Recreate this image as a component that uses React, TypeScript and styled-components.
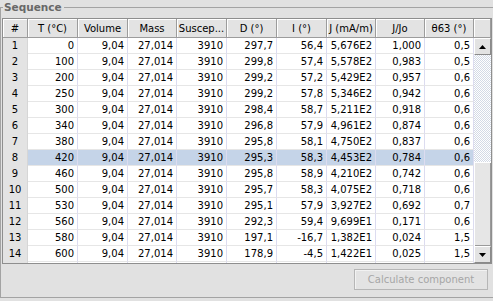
import React from 'react'
import styled, { createGlobalStyle } from 'styled-components'

const GlobalStyle = createGlobalStyle`
  html, body {
    margin: 0;
    padding: 0;
  }
  body {
    background: #e1e1e1;
    font-family: 'DejaVu Sans', Tahoma, sans-serif;
    font-size: 10px;
    color: #000;
  }
`

// column widths of the sequence table, # column first
const COLUMNS = [25, 50, 50, 49, 50, 50, 50, 49, 49, 49]
const template = COLUMNS.map((w) => `${w}px`).join(' ')

const HEADERS = ['#', 'T (°C)', 'Volume', 'Mass', 'Suscep...', 'D (°)', 'I (°)', 'J (mA/m)', 'J/Jo', 'θ63 (°)']

const ROWS = [
  ['0', '9,04', '27,014', '3910', '297,7', '56,4', '5,676E2', '1,000', '0,5'],
  ['100', '9,04', '27,014', '3910', '299,8', '57,4', '5,578E2', '0,983', '0,5'],
  ['200', '9,04', '27,014', '3910', '299,2', '57,2', '5,429E2', '0,957', '0,6'],
  ['250', '9,04', '27,014', '3910', '299,2', '57,8', '5,346E2', '0,942', '0,6'],
  ['300', '9,04', '27,014', '3910', '298,4', '58,7', '5,211E2', '0,918', '0,6'],
  ['340', '9,04', '27,014', '3910', '296,8', '57,9', '4,961E2', '0,874', '0,6'],
  ['380', '9,04', '27,014', '3910', '295,8', '58,1', '4,750E2', '0,837', '0,6'],
  ['420', '9,04', '27,014', '3910', '295,3', '58,3', '4,453E2', '0,784', '0,6'],
  ['460', '9,04', '27,014', '3910', '295,8', '58,9', '4,210E2', '0,742', '0,6'],
  ['500', '9,04', '27,014', '3910', '295,7', '58,3', '4,075E2', '0,718', '0,6'],
  ['530', '9,04', '27,014', '3910', '295,1', '57,9', '3,927E2', '0,692', '0,7'],
  ['560', '9,04', '27,014', '3910', '292,3', '59,4', '9,699E1', '0,171', '0,6'],
  ['580', '9,04', '27,014', '3910', '197,1', '-16,7', '1,382E1', '0,024', '1,5'],
  ['600', '9,04', '27,014', '3910', '178,9', '-4,5', '1,422E1', '0,025', '1,5'],
]

// the next row only peeks out by a pixel under the last one
const PEEK_ROW = ['', '', '', '', '', '', '', '', '']

const SELECTED = 7

const Page = styled.div`
  width: 493px;
  height: 301px;
  overflow: hidden;
  background: #e1e1e1;
`

const Group = styled.fieldset`
  width: 494px;
  box-sizing: border-box;
  margin: 0;
  padding: 4px 1px 0 1px;
  border: 1px solid #a3a3a3;
  min-width: 0;
`

const Legend = styled.legend`
  margin-left: 1px;
  padding: 0 2px 0 1px;
  font-weight: bold;
  font-size: 10.5px;
  line-height: 14px;
  color: #686868;
`

const ScrollPane = styled.div`
  display: grid;
  grid-template-columns: 471px 17px;
  grid-template-rows: 19px 225px;
  width: 490px;
  box-sizing: border-box;
  border: 1px solid #8e8e8e;
  background: #fff;
`

const Header = styled.div`
  display: grid;
  grid-template-columns: ${template};
`

const HeaderCell = styled.div`
  height: 19px;
  box-sizing: border-box;
  display: flex;
  align-items: center;
  justify-content: center;
  background: #e3e3e3;
  border-right: 1px solid #9c9c9c;
  border-bottom: 1px solid #9c9c9c;
  box-shadow: inset 1px 1px 0 #fff;
  white-space: nowrap;
  overflow: hidden;
`

const Body = styled.div`
  overflow: hidden;
`

const Row = styled.div`
  display: grid;
  grid-template-columns: ${template};
  height: 16px;
`

const IndexCell = styled.div`
  box-sizing: border-box;
  background: #e3e3e3;
  border-right: 1px solid #d6d6d6;
  text-align: center;
  line-height: 15px;
`

const Cell = styled.div<{ $selected: boolean }>`
  box-sizing: border-box;
  padding-right: 3px;
  text-align: right;
  line-height: 15px;
  white-space: nowrap;
  overflow: hidden;
  background: ${(p) => (p.$selected ? '#c5d4e8' : '#fff')};
  border-right: 1px solid #dcdcf0;
  border-bottom: 1px solid #e6e6e6;
`

const ScrollBar = styled.div`
  display: flex;
  flex-direction: column;
  background: #e3e3e3;
`

const ArrowButton = styled.div`
  flex: 0 0 17px;
  box-sizing: border-box;
  display: flex;
  align-items: center;
  justify-content: center;
  background: #e3e3e3;
  border: 1px solid;
  border-color: #fff #8a8a8a #8a8a8a #fff;
`

const Dots = styled.div`
  flex: 0 0 107px;
  background: repeating-conic-gradient(#d3dae6 0 25%, #fff 0 50%) 0 0 / 2px 2px;
`

const Thumb = styled.div`
  flex: 1;
  background: #e6e6e6;
  box-shadow: inset 1px 1px 0 #fff, inset -1px -1px 0 #9a9a9a;
`

const Footer = styled.div`
  display: flex;
  justify-content: flex-end;
  padding: 5px 4px 7px 0;
`

const Button = styled.button`
  width: 134px;
  height: 21px;
  box-sizing: border-box;
  padding: 0;
  border: 1px solid #b6b6b6;
  box-shadow: inset 1px 1px 0 #f2f2f2;
  background: #e3e3e3;
  color: #a6a6a6;
  font-family: 'DejaVu Sans', Tahoma, sans-serif;
  font-size: 10px;
`

const Arrow = ({ up }: { up?: boolean }) => (
  <svg width="7" height="4" viewBox="0 0 7 4">
    <path d={up ? 'M0 4 L3.5 0 L7 4 Z' : 'M0 0 L3.5 4 L7 0 Z'} fill="#000" />
  </svg>
)

const App = () => {
  return (
    <Page>
      <GlobalStyle />
      <Group>
        <Legend>Sequence</Legend>
        <ScrollPane>
          <Header>
            {HEADERS.map((h) => (
              <HeaderCell key={h}>{h}</HeaderCell>
            ))}
          </Header>
          <HeaderCell />
          <Body>
            {ROWS.map((row, i) => (
              <Row key={i}>
                <IndexCell>{i + 1}</IndexCell>
                {row.map((v, j) => (
                  <Cell key={j} $selected={i === SELECTED}>
                    {v}
                  </Cell>
                ))}
              </Row>
            ))}
            <Row>
              <IndexCell />
              {PEEK_ROW.map((v, j) => (
                <Cell key={j} $selected={false}>
                  {v}
                </Cell>
              ))}
            </Row>
          </Body>
          <ScrollBar>
            <ArrowButton>
              <Arrow up />
            </ArrowButton>
            <Dots />
            <Thumb />
            <ArrowButton>
              <Arrow />
            </ArrowButton>
          </ScrollBar>
        </ScrollPane>
        <Footer>
          <Button disabled>Calculate component</Button>
        </Footer>
      </Group>
    </Page>
  )
}

export default App
